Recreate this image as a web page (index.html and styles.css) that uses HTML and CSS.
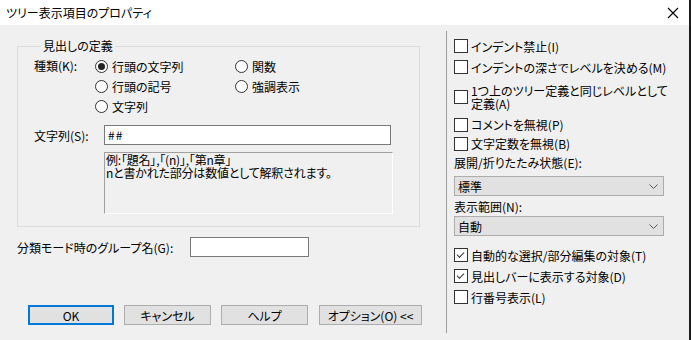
FILE: index.html
```html
<!DOCTYPE html>
<html lang="ja">
<head>
    <meta charset="UTF-8">
    <title>ツリー表示項目のプロパティ</title>
    <link rel="stylesheet" href="styles.css">
</head>
<body>
    <div class="window">
        <div class="titlebar">
            <span class="title">ツリー表示項目のプロパティ</span>
            <svg class="close" width="12" height="12" viewBox="0 0 12 12">
                <path d="M1 1 L11 11 M11 1 L1 11" stroke="#000" stroke-width="1.1" fill="none"/>
            </svg>
        </div>
        <div class="dialog">
            <div class="left">
                <fieldset class="group">
                    <legend>見出しの定義</legend>
                    <div class="kind">
                        <span class="kind-label">種類(K):</span>
                        <div class="radios">
                            <label class="opt"><span class="radio on"></span>行頭の文字列</label>
                            <label class="opt"><span class="radio"></span>関数</label>
                            <label class="opt"><span class="radio"></span>行頭の記号</label>
                            <label class="opt"><span class="radio"></span>強調表示</label>
                            <label class="opt"><span class="radio"></span>文字列</label>
                        </div>
                    </div>
                    <div class="str-row">
                        <span class="str-label">文字列(S):</span>
                        <div class="textbox str-input">##</div>
                    </div>
                    <div class="hint">例:「題名」,「(n)」,「第n章」<br>nと書かれた部分は数値として解釈されます。</div>
                </fieldset>
                <div class="group-name">
                    <span>分類モード時のグループ名(G):</span>
                    <div class="textbox name-input"></div>
                </div>
                <div class="buttons">
                    <div class="btn btn-ok">OK</div>
                    <div class="btn btn-cancel">キャンセル</div>
                    <div class="btn btn-help">ヘルプ</div>
                    <div class="btn btn-opt">オプション(O) &lt;&lt;</div>
                </div>
            </div>
            <div class="right">
                <label class="chk r1"><span class="box"></span>インデント禁止(I)</label>
                <label class="chk r2"><span class="box"></span>インデントの深さでレベルを決める(M)</label>
                <label class="chk r3"><span class="box"></span><span class="two">1つ上のツリー定義と同じレベルとして<br>定義(A)</span></label>
                <label class="chk r4"><span class="box"></span>コメントを無視(P)</label>
                <label class="chk r5"><span class="box"></span>文字定数を無視(B)</label>
                <div class="field-label l1">展開/折りたたみ状態(E):</div>
                <div class="select s1"><span>標準</span><svg width="9" height="5" viewBox="0 0 9 5"><path d="M0.5 0.5 L4.5 4.5 L8.5 0.5" stroke="#555" fill="none"/></svg></div>
                <div class="field-label l2">表示範囲(N):</div>
                <div class="select s2"><span>自動</span><svg width="9" height="5" viewBox="0 0 9 5"><path d="M0.5 0.5 L4.5 4.5 L8.5 0.5" stroke="#555" fill="none"/></svg></div>
                <label class="chk r6"><span class="box on"></span>自動的な選択/部分編集の対象(T)</label>
                <label class="chk r7"><span class="box on"></span>見出しバーに表示する対象(D)</label>
                <label class="chk r8"><span class="box"></span>行番号表示(L)</label>
            </div>
        </div>
    </div>
</body>
</html>
```

FILE: styles.css
```css
body {
    margin: 0;
    background-color: #f0f0f0;
}

.window {
    width: 689px;
    height: 340px;
    border-right: 2px solid #1b1b1b;
    font-family: "Noto Sans CJK JP", "Noto Sans", sans-serif;
    font-size: 12px;
    font-feature-settings: "palt";
    color: #000;
    background-color: #f0f0f0;
    overflow: hidden;
}

.titlebar {
    height: 25px;
    background-color: #fff;
    display: flex;
    align-items: center;
    justify-content: space-between;
    padding: 0 10px 0 6px;
}
.title {
    line-height: 16px;
}

.dialog {
    display: flex;
    height: 315px;
}

.left {
    width: 446px;
    padding-left: 17px;
    box-sizing: border-box;
}

.group {
    margin: 13px 0 0 0;
    padding: 0 0 12px 16px;
    width: 403px;
    box-sizing: border-box;
    border: 1px solid #dcdcdc;
}
.group legend {
    margin-left: 7px;
    padding: 0 2px;
    line-height: 16px;
}

.kind {
    display: flex;
    padding-top: 2px;
}
.kind-label {
    width: 61px;
    line-height: 20px;
}
.radios {
    display: grid;
    grid-template-columns: 140px 120px;
}
.opt {
    display: flex;
    align-items: center;
    height: 20px;
}
.radio {
    width: 11px;
    height: 11px;
    border: 1px solid #333;
    border-radius: 50%;
    margin-right: 4px;
    background-color: #fff;
    position: relative;
}
.radio.on::after {
    content: "";
    position: absolute;
    left: 2px;
    top: 2px;
    width: 7px;
    height: 7px;
    border-radius: 50%;
    background-color: #222;
}

.str-row {
    display: flex;
    align-items: center;
    margin-top: 9px;
}
.str-label {
    width: 70px;
}
.textbox {
    background-color: #fff;
    border: 1px solid #7a7a7a;
    height: 20px;
    box-sizing: border-box;
    line-height: 18px;
}
.str-input {
    width: 287px;
    padding-left: 3px;
    letter-spacing: 1px;
}

.hint {
    margin: 7px 0 0 70px;
    width: 289px;
    height: 62px;
    box-sizing: border-box;
    border-top: 1px solid #a0a0a0;
    border-left: 1px solid #a0a0a0;
    border-right: 1px solid #fff;
    border-bottom: 1px solid #fff;
    padding: 0 0 0 1px;
    line-height: 13px;
    letter-spacing: -0.2px;
}

.group-name {
    display: flex;
    align-items: center;
    margin-top: 10px;
}
.group-name span {
    width: 173px;
}
.name-input {
    width: 119px;
}

.buttons {
    display: flex;
    margin: 48px 0 0 11px;
    gap: 10px;
}
.btn {
    height: 20px;
    box-sizing: border-box;
    background-color: #e1e1e1;
    border: 1px solid #adadad;
    display: flex;
    align-items: center;
    justify-content: center;
}
.btn-ok {
    width: 86px;
    border: 2px solid #0078d7;
}
.btn-cancel,
.btn-help {
    width: 87px;
}
.btn-opt {
    width: 103px;
    margin-left: 1px;
}

.right {
    margin-top: 6px;
    height: 302px;
    border-left: 1px solid #a0a0a0;
    padding-left: 7px;
    display: flex;
    flex-direction: column;
}

.chk {
    display: flex;
    align-items: center;
    height: 20px;
}
.box {
    width: 12px;
    height: 12px;
    border: 1px solid #333;
    background-color: #fff;
    margin-right: 3px;
    flex: none;
    position: relative;
}
.box.on::after {
    content: "";
    position: absolute;
    left: 2px;
    top: 1px;
    width: 6px;
    height: 3px;
    border-left: 1px solid #333;
    border-bottom: 1px solid #333;
    transform: translate(0, 2px) rotate(-45deg);
}
.two {
    line-height: 13px;
}
.r1 { margin-top: 5px; }
.r2 { margin-top: 1px; }
.r3 { height: 26px; margin-top: 7px; }
.r4 { margin-top: 5px; height: 19px; }
.r5 { height: 19px; }
.field-label {
    line-height: 18px;
}
.l1 { margin-top: 1px; }
.l2 { margin-top: 2px; }
.select {
    width: 210px;
    height: 20px;
    box-sizing: border-box;
    background-color: #e1e1e1;
    border: 1px solid #adadad;
    display: flex;
    align-items: center;
    justify-content: space-between;
    padding: 0 5px 0 3px;
}
.s1 { margin-top: 4px; }
.r6 { margin-top: 9px; }
.r7 { margin-top: 1px; }
.r8 { margin-top: 1px; }
```
